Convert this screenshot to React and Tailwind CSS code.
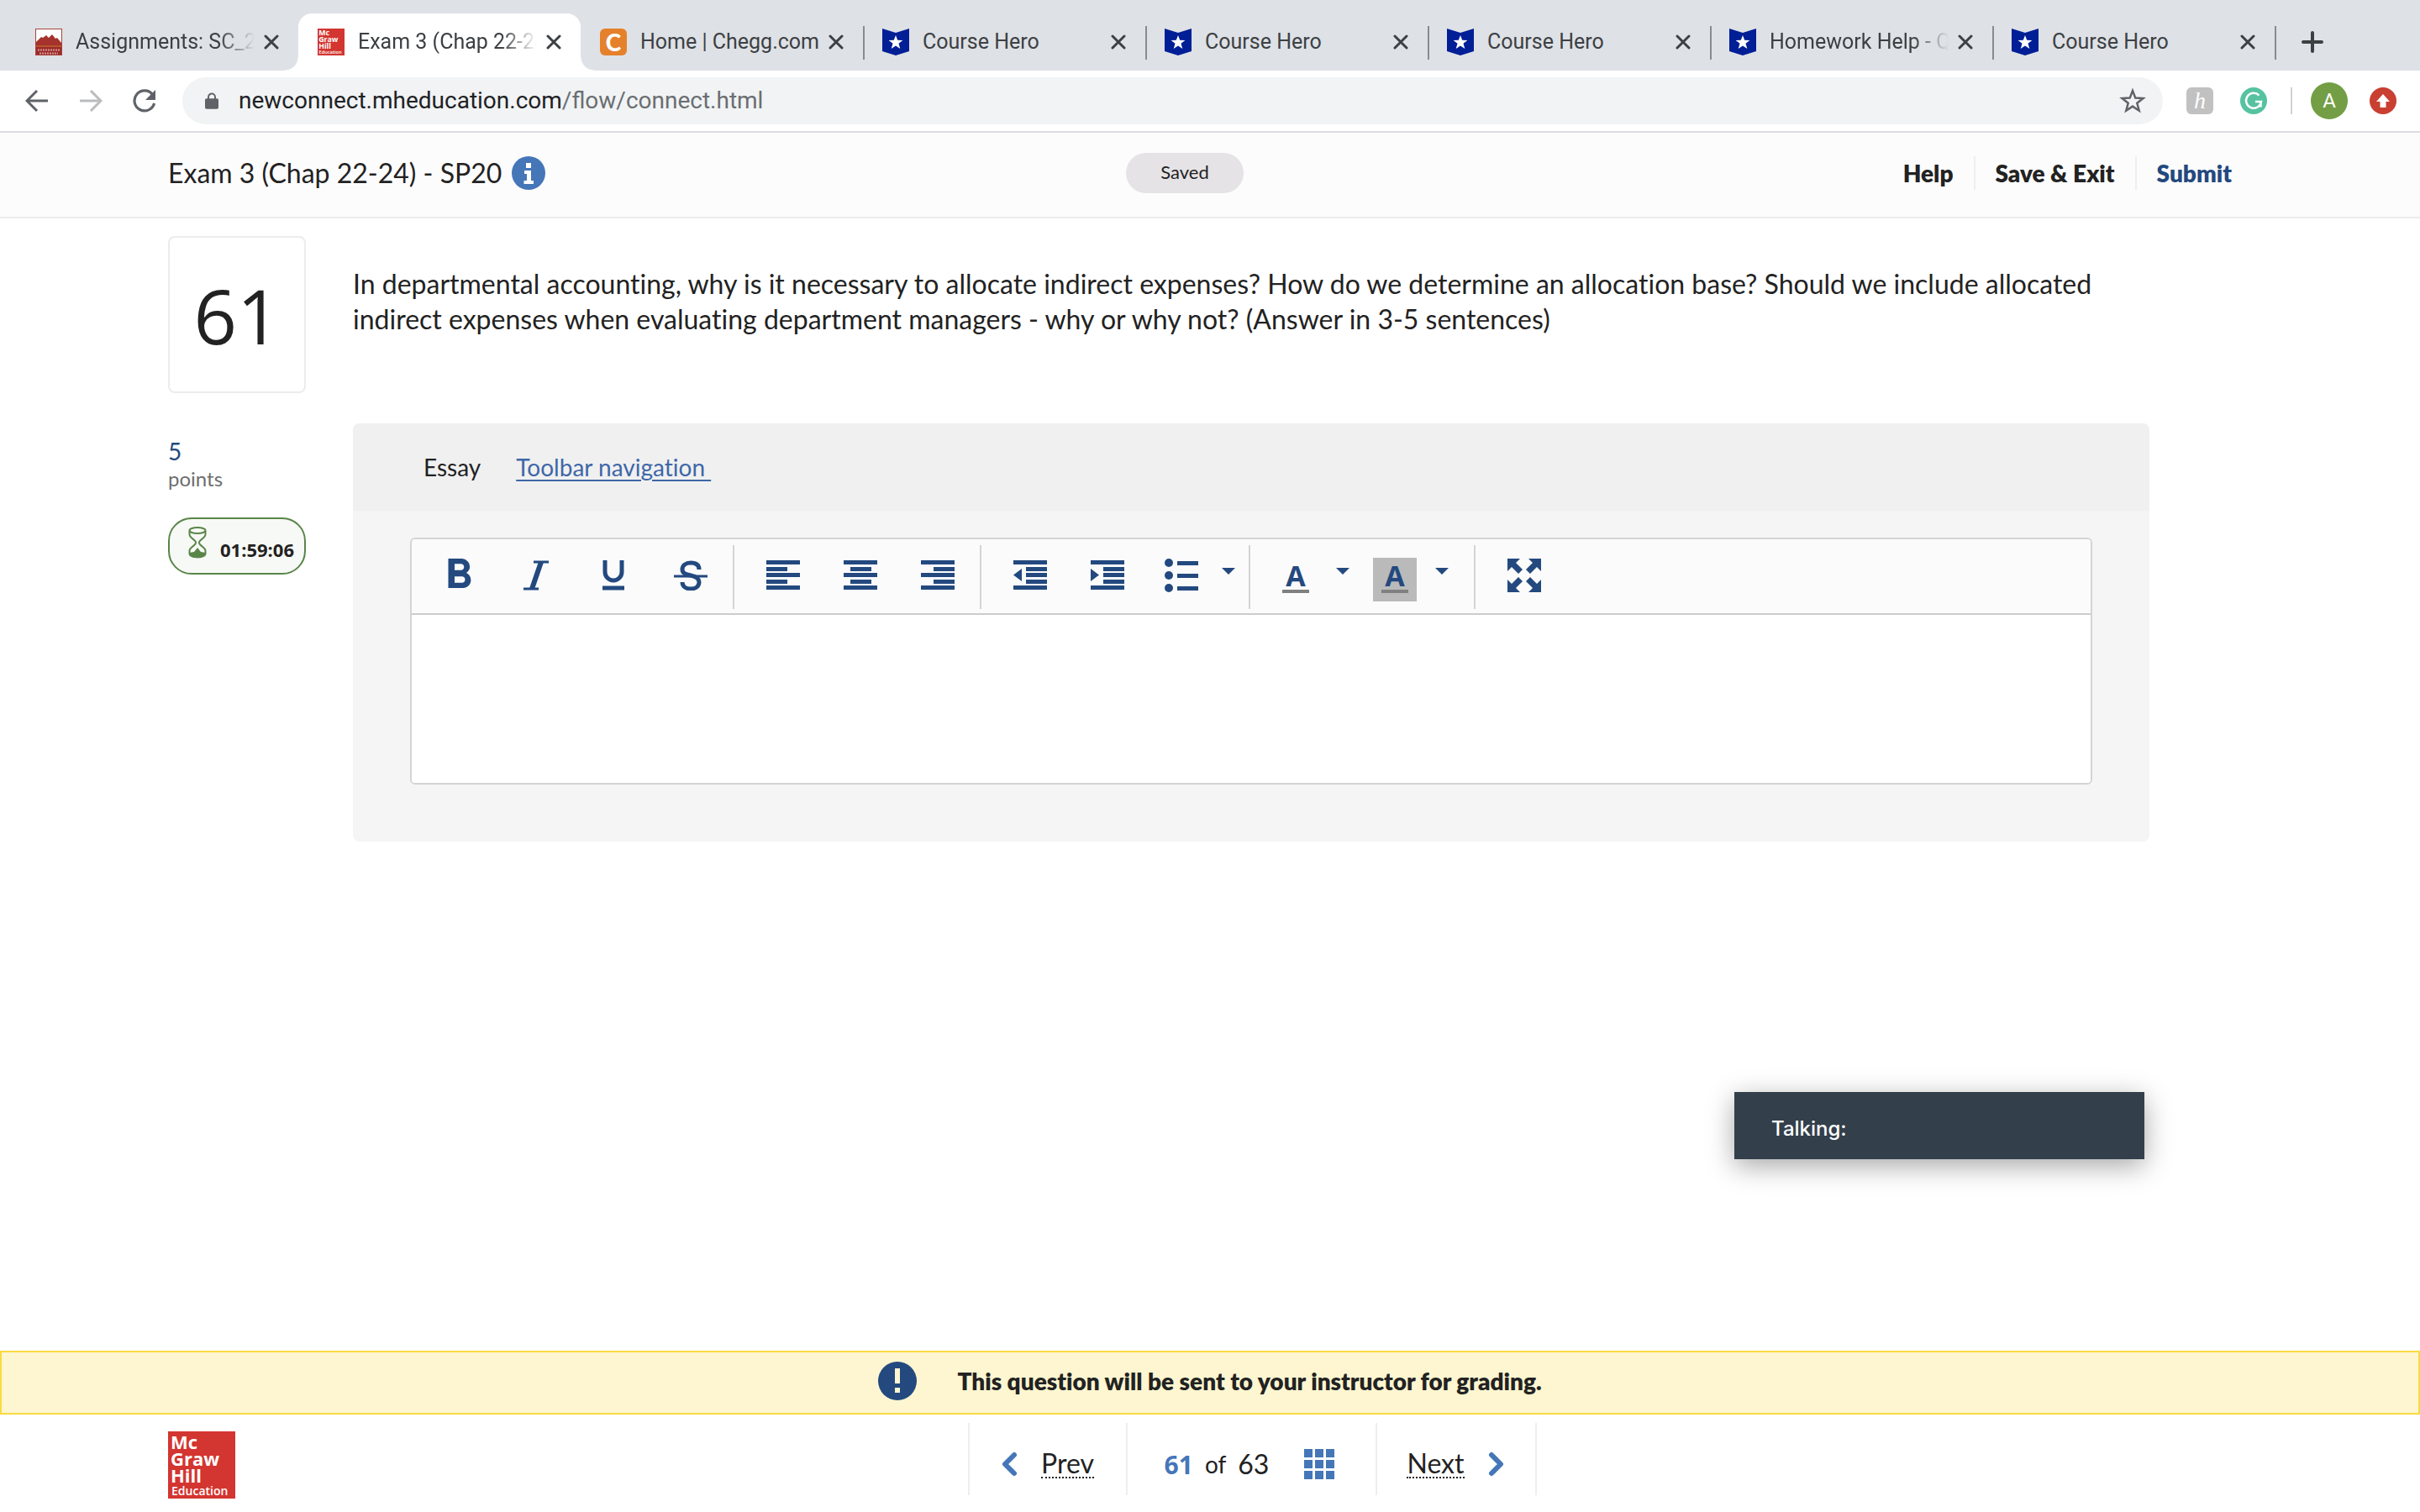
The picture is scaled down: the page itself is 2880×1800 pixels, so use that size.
import { useState } from "react";
import { MdFormatBold } from "react-icons/md";

const tabs = [
  { title: "Assignments: SC_20", icon: "college", fade: true },
  { title: "Exam 3 (Chap 22-24)", icon: "mcgraw", fade: true, active: true },
  { title: "Home | Chegg.com", icon: "chegg" },
  { title: "Course Hero", icon: "hero", divider: true },
  { title: "Course Hero", icon: "hero", divider: true },
  { title: "Course Hero", icon: "hero", divider: true },
  { title: "Homework Help - Q&A", icon: "hero", divider: true, fade: true },
  { title: "Course Hero", icon: "hero", divider: true },
];

const McGrawLogo = ({ className }) => (
  <svg viewBox="0 0 80 80" className={className} aria-label="McGraw Hill Education">
    <rect width="80" height="80" fill="#d33530" />
    <g fill="#fff" fontFamily="'Open Sans', sans-serif" fontWeight="700">
      <text x="3" y="21" fontSize="22">Mc</text>
      <text x="3" y="41" fontSize="22">Graw</text>
      <text x="3" y="61" fontSize="22">Hill</text>
      <text x="4" y="76" fontSize="14" fontWeight="600">Education</text>
    </g>
  </svg>
);

const Favicon = ({ name }) => {
  if (name === "mcgraw") {
    return <McGrawLogo className="size-8 shrink-0" />;
  }

  if (name === "college") {
    return (
      <svg viewBox="0 0 32 32" className="size-8 shrink-0" aria-hidden="true">
        <rect x="0.5" y="0.5" width="31" height="31" fill="#fff" stroke="#a8443a" />
        <path d="M1 20v-4l6-6 2 1 4-3 3 3 4-4 4 5 2-1 5 6v3z" fill="#a5322c" />
        <rect x="1" y="20" width="30" height="2" fill="#b5562f" />
        <rect x="1" y="22" width="30" height="9" fill="#9c2b2b" />
        <path d="M3 25.500h26M5 29.500h22" stroke="#d89a94" strokeWidth="2" strokeDasharray="2 1" />
      </svg>
    );
  }

  if (name === "chegg") {
    return (
      <span className="flex size-8 shrink-0 items-center justify-center rounded-md bg-[#e5812b] font-[Lato,sans-serif] text-[28px] leading-none font-black text-white">
        C
      </span>
    );
  }

  return (
    <svg viewBox="0 0 32 32" className="size-8 shrink-0" aria-hidden="true">
      <path d="M0 0l16 5L32 0v27l-16 5-16-5z" fill="#001e96" />
      <path
        d="M16 8l2.200 5.800 6.200.2-4.900 3.800 1.800 6.200-5.300-3.600-5.300 3.600 1.800-6.200L7.600 14l6.200-.2z"
        fill="#fff"
      />
    </svg>
  );
};

const Tab = ({ tab }) => (
  <div
    className={
      tab.active
        ? "relative flex h-[68px] w-[336px] items-center rounded-t-2xl bg-white pr-5 pl-[23px]"
        : "relative flex h-[68px] w-[336px] items-center pr-5 pl-[23px]"
    }
  >
    {tab.active && (
      <>
        <span className="absolute bottom-0 -left-4 size-4 bg-[radial-gradient(circle_at_0_0,#dee1e6_15px,white_16px)]" />
        <span className="absolute -right-4 bottom-0 size-4 bg-[radial-gradient(circle_at_100%_0,#dee1e6_15px,white_16px)]" />
      </>
    )}
    {tab.divider && (
      <span className="absolute top-[15px] left-0 h-10 w-0.5 bg-[#878b90]" />
    )}
    <Favicon name={tab.icon} />
    <span
      className={
        tab.fade
          ? "ml-4 flex-1 overflow-hidden whitespace-nowrap [mask-image:linear-gradient(to_right,black_80%,transparent)]"
          : "ml-4 flex-1 overflow-hidden whitespace-nowrap"
      }
    >
      {tab.title}
    </span>
    <button aria-label="Close tab" className="ml-2 flex size-6 items-center justify-center">
      <svg viewBox="0 0 18 18" className="size-[18px]">
        <path d="M2 2l14 14M16 2L2 16" stroke="#3c4043" strokeWidth="3" strokeLinecap="round" />
      </svg>
    </button>
  </div>
);

const TabStrip = () => (
  <div className="flex items-end bg-[#dee1e6] pt-4 pl-[19px] text-[25px] leading-8 text-[#3c4043]">
    {tabs.map((tab, index) => (
      <Tab key={index} tab={tab} />
    ))}
    <div className="relative flex h-[68px] items-center pl-8">
      <span className="absolute top-[15px] left-0 h-10 w-0.5 bg-[#878b90]" />
      <button aria-label="New tab">
        <svg viewBox="0 0 26 26" className="size-[26px]">
          <path d="M13 2v22M2 13h22" stroke="#3c4043" strokeWidth="4" strokeLinecap="round" />
        </svg>
      </button>
    </div>
  </div>
);

const AddressBar = () => (
  <div className="flex h-[74px] items-center border-b-2 border-[#dadce0] bg-white pr-7 pl-[30px]">
    <button aria-label="Back">
      <svg viewBox="0 0 28 28" className="size-7" fill="none" stroke="#5f6368" strokeWidth="3">
        <path d="M27 14H3M14 2L2 14l12 12" />
      </svg>
    </button>
    <button aria-label="Forward" className="ml-9">
      <svg viewBox="0 0 28 28" className="size-7" fill="none" stroke="#babcbe" strokeWidth="3">
        <path d="M1 14h24M14 2l12 12-12 12" />
      </svg>
    </button>
    <button aria-label="Reload" className="ml-9">
      <svg viewBox="0 0 28 28" className="size-7" fill="none">
        <path d="M23.500 6.500A12 12 0 1 0 25.600 17" stroke="#5f6368" strokeWidth="3.200" />
        <path d="M27 1v12H15z" fill="#5f6368" />
      </svg>
    </button>

    <div className="ml-[31px] flex h-14 flex-1 items-center rounded-full bg-[#f1f3f4] pr-5 pl-[27px]">
      <svg viewBox="0 0 18 22" className="h-[22px] w-4" aria-hidden="true">
        <path d="M4.500 9V6a4.500 4.500 0 0 1 9 0v3" fill="none" stroke="#5f6368" strokeWidth="2.200" />
        <rect y="8" width="18" height="14" rx="2" fill="#5f6368" />
      </svg>
      <div className="ml-6 flex-1 text-[28px] leading-9 text-[#202124]">
        newconnect.mheducation.com<span className="text-[#6a6e72]">/flow/connect.html</span>
      </div>
      <button aria-label="Bookmark this tab">
        <svg viewBox="0 0 32 32" className="size-8">
          <path
            d="M16 4l3.300 8.600 9.200.4-7.200 5.800 2.400 8.900L16 22.600l-7.700 5.100 2.400-8.900L3.500 13l9.200-.4z"
            fill="none"
            stroke="#5f6368"
            strokeWidth="2.500"
          />
        </svg>
      </button>
    </div>

    <span className="ml-7 flex size-8 items-center justify-center rounded-md bg-[#c1c1c1] font-['Liberation_Serif',serif] text-[28px] leading-none text-white italic">
      h
    </span>
    <svg viewBox="0 0 32 32" className="ml-8 size-8" aria-hidden="true">
      <circle cx="16" cy="16" r="16" fill="#56c2a0" />
      <path
        d="M22.500 9.500A9 9 0 1 0 25 17h-7M24.500 17v6.500"
        fill="none"
        stroke="#fff"
        strokeWidth="2.500"
      />
    </svg>
    <span className="ml-7 h-8 w-0.5 bg-[#d0d2d5]" />
    <button
      aria-label="Profile"
      className="ml-[22px] flex size-11 items-center justify-center rounded-full bg-[#739e45] text-[24px] text-white"
    >
      A
    </button>
    <button aria-label="Update browser" className="ml-[26px]">
      <svg viewBox="0 0 32 32" className="size-8">
        <circle cx="16" cy="16" r="16" fill="#c93f31" />
        <path d="M16 8l8 9h-4.500v7h-7v-7H8z" fill="#fff" />
      </svg>
    </button>
  </div>
);

const ExamHeader = () => (
  <header className="grid h-[102px] grid-cols-[1fr_auto_1fr] items-center border-b-2 border-[#ececec] bg-[#fcfcfc] pr-[260px] pb-1 pl-[200px]">
    <div className="flex items-center gap-3">
      <h1 className="text-[32px] leading-10">Exam 3 (Chap 22-24) - SP20</h1>
      <button aria-label="Exam information">
        <svg viewBox="0 0 40 40" className="size-10">
          <circle cx="20" cy="20" r="20" fill="#4576b8" />
          <path d="M17 8h6v6h-6zM15 17h8v12h3v4H14.500v-4H18v-8h-3z" fill="#fff" />
        </svg>
      </button>
    </div>
    <div className="flex h-12 w-[140px] items-center justify-center rounded-full bg-[#e5e3e6] pb-1 text-[22px]">
      Saved
    </div>
    <nav className="-mr-9 flex items-center justify-self-end text-[28px] leading-10 font-extrabold">
      <a href="#help" className="pr-6">Help</a>
      <a href="#save" className="border-x-2 border-[#eeeeee] px-6">Save &amp; Exit</a>
      <a href="#submit" className="pl-6 text-[#23497f]">Submit</a>
    </nav>
  </header>
);

const QuestionSide = () => (
  <aside className="w-[164px] shrink-0">
    <div className="flex h-[187px] items-center justify-center rounded-lg border-2 border-[#ececec] font-['Open_Sans',sans-serif] text-[90px] leading-none font-medium">
      61
    </div>
    <div className="mt-[52px] text-[28px] leading-[34px] text-[#23497f]">5</div>
    <div className="text-[24px] leading-8 text-[#6e6e6e]">points</div>
    <div className="mt-[30px] flex h-[68px] items-center rounded-[28px] border-2 border-[#5a8549] bg-[#f7f9f6] pl-[22px]">
      <svg viewBox="0 0 22 38" className="mb-2 h-[38px] w-[22px]" aria-hidden="true">
        <g fill="none" stroke="#5a8549" strokeWidth="2">
          <ellipse cx="11" cy="4.500" rx="9.500" ry="3.500" />
          <path d="M1.500 5v4c0 5 7.500 6 7.500 10s-7.500 5-7.500 10v4M20.500 5v4c0 5-7.500 6-7.500 10s7.500 5 7.500 10v4" />
        </g>
        <path d="M1 31l6-1 4-5 4 5 6 1v3c-3 4.500-17 4.500-20 0z" fill="#5a8549" />
      </svg>
      <span className="mt-2 ml-4 font-['Open_Sans',sans-serif] text-[22px] leading-none font-bold">
        01:59:06
      </span>
    </div>
  </aside>
);

const ToolButton = ({ label, wide, children }) => (
  <button
    aria-label={label}
    className={
      wide
        ? "flex h-[76px] w-[92px] items-center justify-center pb-1"
        : "flex h-[76px] w-[84px] items-center justify-center pb-1"
    }
  >
    {children}
  </button>
);

const CaretButton = ({ label }) => (
  <button aria-label={label} className="flex h-[76px] w-7 items-center justify-center pb-3.5">
    <svg viewBox="0 0 16 8" className="h-2 w-4">
      <path d="M0 0h16l-8 8z" fill="#23497f" />
    </svg>
  </button>
);

// Icons whose bars all sit on the same 40x36 grid
const BarsIcon = ({ d }) => (
  <svg viewBox="0 0 40 36" className="h-9 w-10">
    <path d={d} fill="#23497f" />
  </svg>
);

const LetterIcon = ({ d }) => (
  <svg viewBox="0 0 40 36" className="h-9 w-10" fill="none" stroke="#23497f">
    {d.map((part) => (
      <path key={part.path} d={part.path} strokeWidth={part.width} />
    ))}
  </svg>
);

const ColorLetter = () => (
  <span className="flex w-8 flex-col items-center border-b-4 border-[#808080] font-['Open_Sans',sans-serif] text-[34px] leading-[34px] font-bold text-[#23497f]">
    A
  </span>
);

const Toolbar = () => (
  <div className="flex h-[90px] items-center border-b-2 border-[#cccccc] bg-[#fbfbfb] pt-0.5 pl-2.5">
    <div className="flex border-r-2 border-[#d4d4d4] pr-1">
      <ToolButton label="Bold" wide>
        <MdFormatBold className="size-[60px] text-[#23497f]" />
      </ToolButton>
      <ToolButton label="Italic" wide>
        <LetterIcon
          d={[
            { path: "M17 2h18M5 34h18", width: 3 },
            { path: "M26 2L15 34", width: 6 },
          ]}
        />
      </ToolButton>
      <ToolButton label="Underline" wide>
        <LetterIcon
          d={[
            { path: "M10 0v14a10 10 0 0 0 20 0V0", width: 5 },
            { path: "M7 33h26", width: 5 },
          ]}
        />
      </ToolButton>
      <ToolButton label="Strikethrough" wide>
        <LetterIcon
          d={[
            { path: "M30 11C30 5 26 3 20 3S10 6 10 11s5 6 10 7 10 3 10 8-4 8-10 8-10-3-10-8", width: 5 },
            { path: "M0 19h40", width: 3 },
          ]}
        />
      </ToolButton>
    </div>
    <div className="flex border-r-2 border-[#d4d4d4] pr-1 pl-3">
      <ToolButton label="Align left" wide>
        <BarsIcon d="M0 0h40v5H0zM0 8h25v5H0zM0 15h40v5H0zM0 23h25v5H0zM0 30h40v5H0z" />
      </ToolButton>
      <ToolButton label="Align center" wide>
        <BarsIcon d="M0 0h40v5H0zM8 8h25v5H8zM0 15h40v5H0zM8 23h25v5H8zM0 30h40v5H0z" />
      </ToolButton>
      <ToolButton label="Align right" wide>
        <BarsIcon d="M0 0h40v5H0zM15 8h25v5H15zM0 15h40v5H0zM15 23h25v5H15zM0 30h40v5H0z" />
      </ToolButton>
    </div>
    <div className="flex border-r-2 border-[#d4d4d4] pr-2.5 pl-3">
      <ToolButton label="Outdent" wide>
        <BarsIcon d="M0 0h40v5H0zM15 8h25v5H15zM15 15h25v5H15zM15 23h25v5H15zM0 30h40v5H0zM10 10v15L0 17.500z" />
      </ToolButton>
      <ToolButton label="Indent" wide>
        <BarsIcon d="M0 0h40v5H0zM15 8h25v5H15zM15 15h25v5H15zM15 23h25v5H15zM0 30h40v5H0zM0 10v15l10-7.500z" />
      </ToolButton>
      <ToolButton label="Bulleted list">
        <svg viewBox="0 0 40 40" className="size-10" fill="#23497f">
          <circle cx="5" cy="5" r="5" />
          <circle cx="5" cy="20" r="5" />
          <circle cx="5" cy="35" r="5" />
          <path d="M15 3h25v5H15zM15 18h25v5H15zM15 33h25v5H15z" />
        </svg>
      </ToolButton>
      <CaretButton label="List options" />
    </div>
    <div className="flex gap-1.5 border-r-2 border-[#d4d4d4] pr-6 pl-3">
      <div className="flex">
        <ToolButton label="Text color">
          <span className="mt-2.5 flex size-[52px] items-end justify-center pb-2.5">
            <ColorLetter />
          </span>
        </ToolButton>
        <CaretButton label="Text color options" />
      </div>
      <div className="flex">
        <ToolButton label="Background color">
          <span className="mt-2.5 flex size-[52px] items-end justify-center bg-[#bababa] pb-2.5">
            <ColorLetter />
          </span>
        </ToolButton>
        <CaretButton label="Background color options" />
      </div>
    </div>
    <div className="pl-3">
      <ToolButton label="Full screen" wide>
        <svg viewBox="0 0 40 40" className="size-10" fill="#23497f">
          <path d="M0 0h15l-5 5 8 8-5 5-8-8-5 5zM40 0v15l-5-5-8 8-5-5 8-8-5-5zM0 40V25l5 5 8-8 5 5-8 8 5 5zM40 40H25l5-5-8-8 5-5 8 8 5-5z" />
        </svg>
      </ToolButton>
    </div>
  </div>
);

const EssayPanel = () => {
  const [answer, setAnswer] = useState("");

  return (
    <section className="overflow-hidden rounded-lg bg-[#f5f5f5]">
      <div className="flex h-[104px] items-center gap-[42px] bg-[#f0f0f0] pl-[84px] text-[28px] leading-9">
        <label htmlFor="essay">Essay</label>
        <a href="#toolbar" className="text-[#3e67a8] underline underline-offset-4">
          Toolbar navigation&nbsp;
        </a>
      </div>
      <div className="px-[68px] pt-8 pb-[68px]">
        <div className="overflow-hidden rounded-md border-2 border-[#d4d4d4] bg-white">
          <Toolbar />
          <textarea
            id="essay"
            value={answer}
            onChange={(e) => setAnswer(e.target.value)}
            className="block h-[200px] w-full resize-none bg-white p-6 text-[28px] outline-none"
          />
        </div>
      </div>
    </section>
  );
};

const GradingNotice = () => (
  <div className="flex h-[76px] items-center justify-center gap-12 border-2 border-[#fadb41] bg-[#fdf6d0] pb-1">
    <svg viewBox="0 0 46 46" className="size-[46px]" aria-hidden="true">
      <circle cx="23" cy="23" r="23" fill="#23497f" />
      <path d="M20 8h6v18h-6zM20 31h6v6h-6z" fill="#fdf6d0" />
    </svg>
    <p className="text-[28px] leading-9 font-extrabold">
      This question will be sent to your instructor for grading.
    </p>
  </div>
);

const Chevron = ({ d }) => (
  <svg viewBox="0 0 20 30" className="h-[30px] w-5" fill="none" aria-hidden="true">
    <path d={d} stroke="#4576b8" strokeWidth="6" strokeLinecap="round" strokeLinejoin="round" />
  </svg>
);

const Footer = () => (
  <footer className="flex h-[116px] items-start bg-white pr-[100px] pl-[200px]">
    <div className="flex-1 pt-5">
      <McGrawLogo className="size-20" />
    </div>
    <div className="mt-2.5 flex h-[86px] divide-x-2 divide-[#eeeeee] border-x-2 border-[#eeeeee] text-[32px]">
      <button className="flex w-[188px] items-center justify-center gap-7 pt-3">
        <Chevron d="M16 4L5 15l11 11" />
        <span className="border-b-2 border-dotted border-[#222222] leading-8">Prev</span>
      </button>
      <div className="flex w-[297px] items-center justify-center gap-3.5 pt-3 pr-1">
        <span className="font-['Open_Sans',sans-serif] text-[30px] font-bold text-[#4576b8]">61</span>
        <span className="text-[28px]">of</span>
        <span>63</span>
        <button aria-label="Question map" className="ml-7">
          <svg viewBox="0 0 36 36" className="size-9">
            <path
              d="M0 0h10v10H0zM13 0h10v10H13zM26 0h10v10H26zM0 13h10v10H0zM13 13h10v10H13zM26 13h10v10H26zM0 26h10v10H0zM13 26h10v10H13zM26 26h10v10H26z"
              fill="#4576b8"
            />
          </svg>
        </button>
      </div>
      <button className="flex w-[188px] items-center justify-center gap-7 pt-3">
        <span className="border-b-2 border-dotted border-[#222222] leading-8">Next</span>
        <Chevron d="M4 4l11 11L4 26" />
      </button>
    </div>
    <div className="flex-1" />
  </footer>
);

const App = () => {
  return (
    <div className="flex min-h-screen flex-col bg-white font-[Roboto,sans-serif]">
      <TabStrip />
      <AddressBar />
      <div className="relative flex flex-1 flex-col font-[Lato,sans-serif] text-[#222222] [font-variant-ligatures:none]">
        <ExamHeader />
        <main className="flex flex-1 gap-14 pt-[21px] pr-[322px] pl-[200px]">
          <QuestionSide />
          <div className="flex-1">
            <p className="mt-9 mb-[103px] text-[32px] leading-[42px]">
              In departmental accounting, why is it necessary to allocate indirect expenses? How do
              we determine an allocation base? Should we include allocated indirect expenses when
              evaluating department managers - why or why not? (Answer in 3-5 sentences)
            </p>
            <EssayPanel />
          </div>
        </main>
        <GradingNotice />
        <Footer />
        <div className="absolute right-[328px] bottom-[420px] flex h-20 w-[488px] items-center bg-[#333f4b] pt-2 pl-11 font-[Inter,sans-serif] text-[24px] font-medium text-white shadow-[0_8px_32px_rgba(0,0,0,0.35)]">
          Talking:
        </div>
      </div>
    </div>
  );
};

export default App;
